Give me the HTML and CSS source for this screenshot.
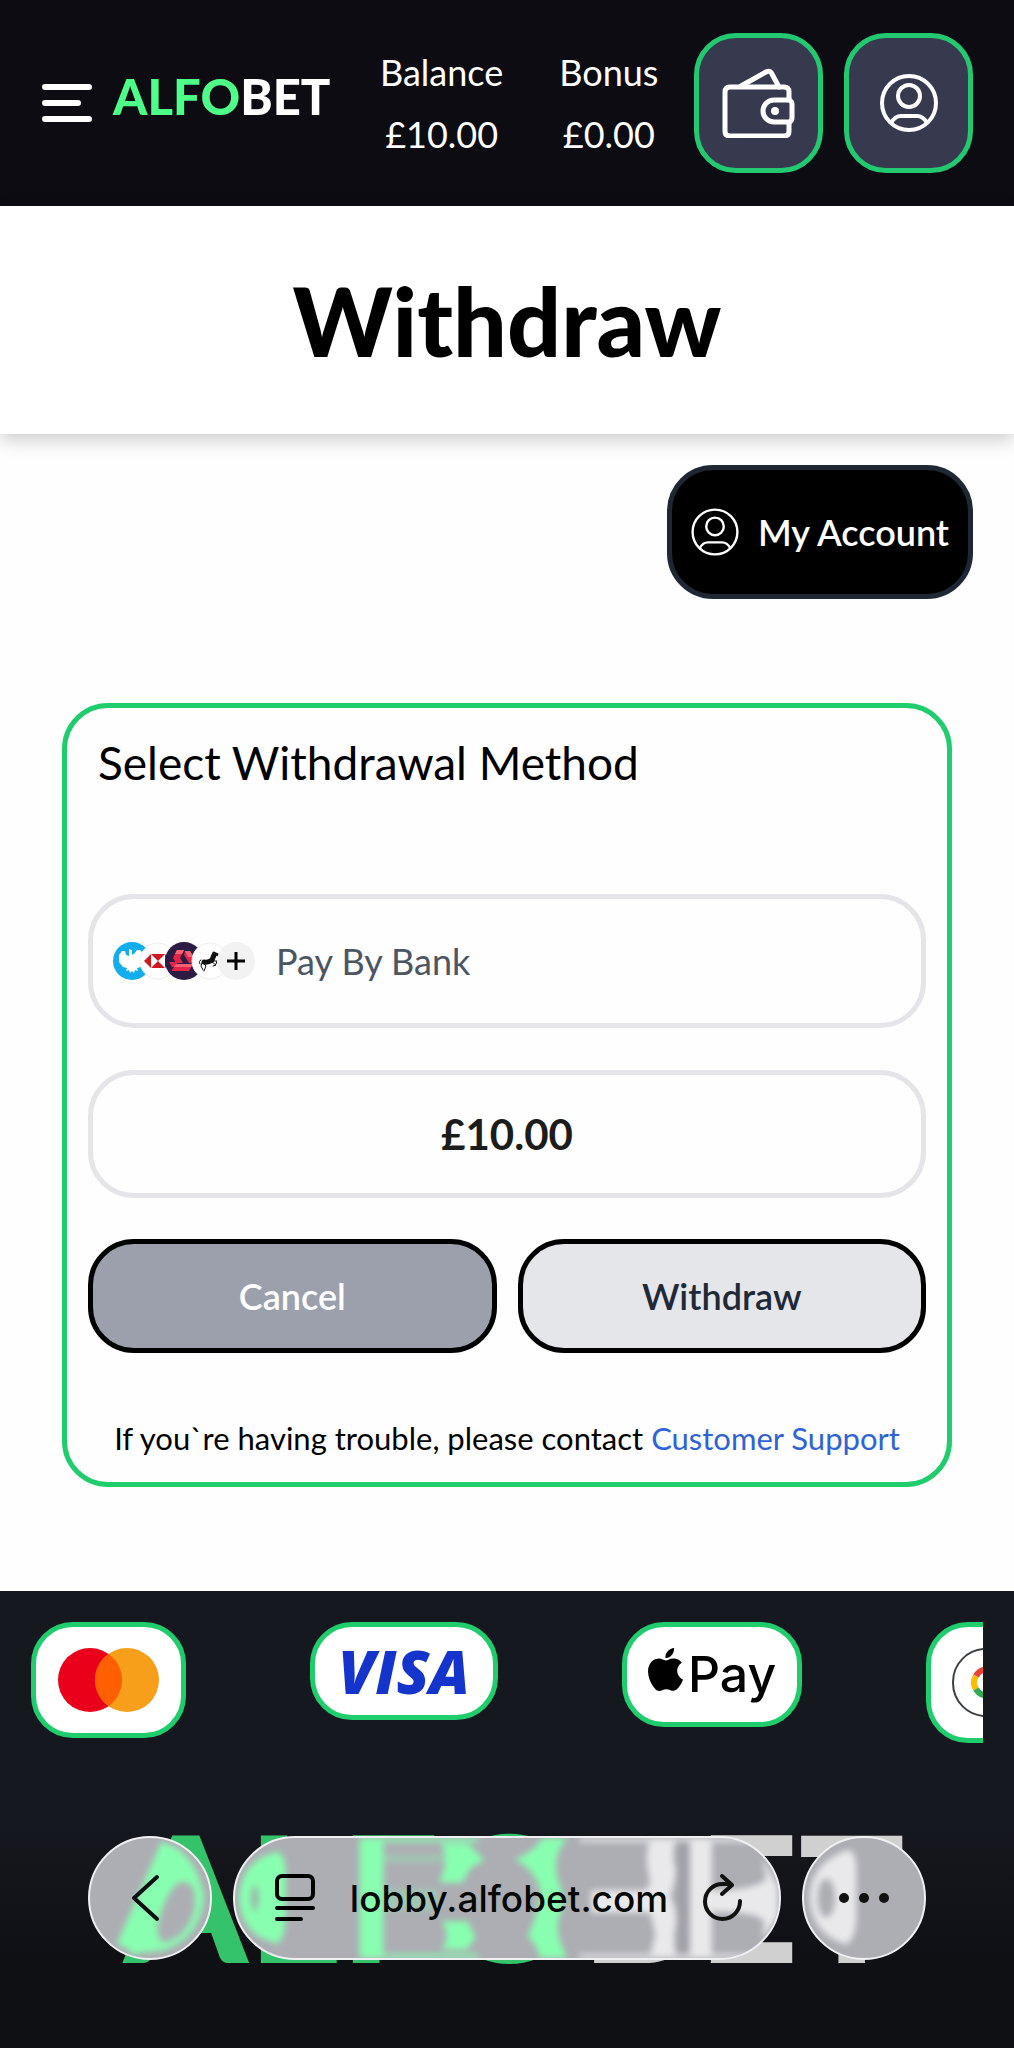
FILE: index.html
```html
<!DOCTYPE html>
<html lang="en">
<head>
    <meta charset="UTF-8">
    <meta name="viewport" content="width=device-width, initial-scale=1.0">
    <title>Withdraw</title>
    <link rel="stylesheet" href="styles.css">
</head>
<body>

    <header class="topbar">
        <button class="menu-button" aria-label="Menu">
            <svg width="50" height="38" viewBox="0 0 50 38" stroke="#fff" stroke-width="6" stroke-linecap="round">
                <path d="M3 3h44M3 19h33M3 35h44"/>
            </svg>
        </button>
        <a href="#" class="logo"><span class="logo-green">ALFO</span>BET</a>
        <div class="stats">
            <div class="stat"><span>Balance</span><span>£10.00</span></div>
            <div class="stat"><span>Bonus</span><span>£0.00</span></div>
        </div>
        <div class="top-actions">
            <button class="icon-button" aria-label="Wallet">
                <svg width="74" height="70" viewBox="0 0 74 70" fill="none" stroke="#fff" stroke-width="5" stroke-linejoin="round" stroke-linecap="round">
                    <path d="M67 32V24q0-5-5-5H8q-5 0-5 5v39q0 5 5 5h54q5 0 5-5v-8"/>
                    <path d="M19 18 44 4q4-2 6 2l7 13"/>
                    <path d="M67 32H52a11 11 0 0 0 0 22h15q3-1 3-4V36q0-3-3-4z"/>
                    <circle cx="53" cy="43" r="4" fill="#fff" stroke="none"/>
                </svg>
            </button>
            <button class="icon-button" aria-label="Profile">
                <svg width="60" height="60" viewBox="0 0 60 60" fill="none" stroke="#fff" stroke-width="4">
                    <circle cx="30" cy="30" r="27"/>
                    <circle cx="30" cy="23" r="11"/>
                    <path d="M12 50q4-7 10-7h16q6 0 10 7"/>
                </svg>
            </button>
        </div>
    </header>

    <div class="page-title">
        <h1>Withdraw</h1>
    </div>

    <main>
        <div class="account-row">
            <button class="account-button">
                <svg width="48" height="48" viewBox="0 0 60 60" fill="none" stroke="#fff" stroke-width="3">
                    <circle cx="30" cy="30" r="28"/>
                    <circle cx="30" cy="23" r="11"/>
                    <path d="M11 50q4-7 10-7h18q6 0 10 7"/>
                </svg>
                My Account
            </button>
        </div>

        <form class="withdraw-card">
            <h2>Select Withdrawal Method</h2>

            <button type="button" class="field method">
                <svg width="142" height="38" viewBox="0 0 142 38">
                    <circle cx="19" cy="19" r="19" fill="#12adec"/>
                    <path d="M16 7l3 1v5l3-2 2-3h3l4 4v8l-3 5-4 1 1 3-3-1-1 3-2-2-2 2-1-3-3 1 1-3-4-1-4-5v-7l3-4h3l1 4 3 1z" fill="#fff"/>
                    <circle cx="45" cy="19" r="18" fill="#fff" stroke="#eee"/>
                    <path d="M31 19l7-7v14z" fill="#cf1820"/>
                    <path d="M38 12h14l-7 7zM38 26h14l-7-7zM52 12l7 7-7 7z" fill="#cf1820"/>
                    <circle cx="71" cy="19" r="19" fill="#2c1b42"/>
                    <path d="M64 8h7l-4 8 3 5h-7l-3-5zM72 9l4 0 7 12h-7l-5-8zM56 20h7l3 5h-7zM59 28l4-6h17l-4 7H59z" fill="#e32447"/>
                    <path d="M64 8h7l-2 4h-7zM72 9h5l4 6h-6zM63 22h17l-2 3H61z" fill="#fb6172"/>
                    <circle cx="97" cy="19" r="18" fill="#fff" stroke="#eee"/>
                    <g fill="none" stroke="#111" stroke-linecap="round" stroke-linejoin="round">
                        <path d="M91 20q4 1 8-2l2-5" stroke-width="5"/>
                        <path d="M101 11l4 2" stroke-width="3"/>
                        <path d="M90 21l3 3-2 5M89 21l-1 3 2 4M100 19h4l-1 3M99 20l4 3-3 1M88 18q-3 1-1 4" stroke-width="1"/>
                    </g>
                    <circle cx="123" cy="19" r="19" fill="#f2f2f2"/>
                    <path d="M123 10v18M114 19h18" stroke="#000" stroke-width="3"/>
                </svg>
                Pay By Bank
            </button>

            <input type="text" class="field amount" value="£10.00" aria-label="Amount">

            <div class="form-buttons">
                <button type="button" class="cancel-button">Cancel</button>
                <button type="submit" class="submit-button">Withdraw</button>
            </div>

            <p class="help">If you`re having trouble, please contact <a href="#">Customer Support</a></p>
        </form>
    </main>

    <footer class="footer">
        <div class="payments">
            <div class="payment">
                <svg width="103" height="64" viewBox="0 0 101 64">
                    <circle cx="32" cy="32" r="32" fill="#eb001b"/>
                    <circle cx="69" cy="32" r="32" fill="#f79e1b"/>
                    <path d="M50.500 5.900a32 32 0 0 1 0 52.200 32 32 0 0 1 0-52.200z" fill="#ff5f00"/>
                </svg>
            </div>
            <div class="payment visa">VISA</div>
            <div class="payment apple">
                <svg width="35" height="43" viewBox="2.200 0 19.600 24">
                    <path d="M12.152 6.896c-.948 0-2.415-1.078-3.960-1.040-2.040.027-3.910 1.183-4.961 3.014-2.117 3.675-.546 9.103 1.519 12.090 1.013 1.454 2.208 3.090 3.792 3.039 1.520-.065 2.090-.987 3.935-.987 1.831 0 2.350.987 3.960.948 1.637-.026 2.676-1.480 3.676-2.948 1.156-1.688 1.636-3.325 1.662-3.415-.039-.013-3.182-1.221-3.220-4.857-.026-3.040 2.480-4.494 2.597-4.559-1.429-2.090-3.623-2.324-4.390-2.376-2-.156-3.675 1.090-4.610 1.090zM15.530 3.830c.843-1.012 1.400-2.427 1.245-3.830-1.207.052-2.662.805-3.532 1.818-.780.896-1.454 2.338-1.273 3.714 1.338.104 2.715-.688 3.559-1.701"/>
                </svg>
                <span>Pay</span>
            </div>
            <div class="payment">
                <svg width="126" height="69" viewBox="0 0 126 69" fill="none">
                    <rect x="1" y="1" width="124" height="67" rx="33" stroke="#3c4043" stroke-width="2"/>
                    <g stroke-width="6">
                        <path d="M44 26a12 12 0 0 0-20 2" stroke="#ea4335"/>
                        <path d="M24 28a12 12 0 0 0 0 13" stroke="#fbbc04"/>
                        <path d="M24 41a12 12 0 0 0 19 3" stroke="#34a853"/>
                        <path d="M43 44q4-4 4-9H35" stroke="#4285f4"/>
                    </g>
                </svg>
            </div>
        </div>
        <div class="footer-logo"><span class="logo-green">ALFO</span>BET</div>
    </footer>

    <nav class="browser-bar">
        <button class="glass round" aria-label="Back">
            <svg class="tint" viewBox="0 0 124 124" preserveAspectRatio="none">
                <path d="M84 8Q110 20 118 60 114 104 76 116L40 120 46 96z" fill="#88ffb0"/>
                <path d="M84 8 38 114" stroke="#88ffb0" stroke-width="22"/>
                <path d="M92 46q-12 8-20 36-6 20 4 26 24-4 32-34 4-32-16-28z" fill="#adaeb4"/>
            </svg>
            <svg class="glyph" width="38" height="48" viewBox="0 0 38 48" fill="none" stroke="#0b0f12" stroke-width="4" stroke-linecap="round" stroke-linejoin="round">
                <path d="M26 3 3 24l23 21"/>
            </svg>
        </button>
        <div class="glass address">
            <svg class="tint" viewBox="0 0 550 124" preserveAspectRatio="none">
                <g fill="#88ffb0">
                    <path d="M44 14Q6 22 4 62q2 40 40 47 7-10 7-26V34q0-14-7-20z"/>
                    <path d="M126 0h24v124h-24z"/>
                    <path d="M150 0h96v4h-96zM150 120h96v4h-96z"/>
                    <path d="M208 6h28l16 17-14 8-8 15h-24q12-22 2-40zM209 86h26l8 16-8 13h-26q10-14 0-29z"/>
                    <path d="M336 0h-25q-8 14-28 22 22 12 26 34-2 20-13 46 10 8 12 22h28q-14-26-8-42 6-22 0-34-10-28 8-48z"/>
                    <path d="M150 17h62v8h-62z" opacity=".3"/>
                    <path d="M150 53h55v22h-55z" opacity=".3"/>
                </g>
                <g fill="#e9e9eb">
                    <path d="M348 0h190v4H348zM348 120h190v4H348z"/>
                    <path d="M419 4h26q-4 14 1 30-1 14-6 26 8 16 6 30-4 16 0 30h-26l5-20-5-22q-4-2-60-1V54h54q8-4 4-18-4-18 1-32z"/>
                    <path d="M460 0h22v124h-22z"/>
                    <path d="M481 54q46 0 56-12l-4-22 16 30v32l-16 22 2-18q-8-10-54-10z"/>
                </g>
                <path d="M447 4h12v116h-12z" fill="#a0a1a8"/>
                <ellipse cx="20" cy="62" rx="4" ry="13" fill="#9cb8aa"/>
            </svg>
            <svg class="glyph" width="40" height="48" viewBox="0 0 40 48" fill="none" stroke="#000" stroke-width="4" stroke-linecap="round">
                <rect x="2" y="2" width="36" height="23" rx="5"/>
                <path d="M2 34h36M2 45h24"/>
            </svg>
            <span class="url">lobby.alfobet.com</span>
            <button class="reload" aria-label="Reload">
                <svg width="40" height="48" viewBox="0 0 40 48" fill="none" stroke="#111" stroke-width="4" stroke-linecap="round" stroke-linejoin="round">
                    <path d="M37 27A17.500 17.500 0 1 1 20 10h8M19 2l10 9-10 9"/>
                </svg>
            </button>
        </div>
        <button class="glass round" aria-label="More">
            <svg class="tint" viewBox="0 0 124 124" preserveAspectRatio="none">
                <path d="M46 12Q6 26 6 62q2 38 38 48 10-8 10-26V30q0-14-8-18z" fill="#e9e9eb"/>
                <ellipse cx="23" cy="62" rx="9" ry="20" fill="#adaeb4"/>
            </svg>
            <svg class="glyph" width="52" height="12" viewBox="0 0 52 12" fill="#111">
                <circle cx="6" cy="6" r="5"/>
                <circle cx="26" cy="6" r="5"/>
                <circle cx="46" cy="6" r="5"/>
            </svg>
        </button>
    </nav>

</body>
</html>
```

FILE: styles.css
```css
* {
    box-sizing: border-box;
}
body {
    margin: 0;
    min-height: 100vh;
    display: flex;
    flex-direction: column;
    position: relative;
    background-color: #fefefe;
    font-family: Lato, "Noto Sans", sans-serif;
    font-size: 36px;
    color: #000;
}
svg {
    display: block;
    flex-shrink: 0;
}
button, input {
    font-family: inherit;
    font-size: inherit;
    cursor: pointer;
}

/* top bar */
.topbar {
    display: flex;
    align-items: center;
    padding: 33px 41px 33px 42px;
    background-color: #0c0c12;
    color: #fff;
}
.menu-button, .reload {
    padding: 0;
    border: none;
    background: none;
}
.logo {
    margin-left: 21px;
    padding-bottom: 14px;
    font-size: 49px;
    line-height: 50px;
    font-weight: 900;
    color: #fff;
    text-decoration: none;
}
.logo-green {
    color: #4dff88;
}
.stats {
    flex: 1;
    display: flex;
    justify-content: center;
    gap: 56px;
    padding-left: 14px;
}
.stat {
    display: flex;
    flex-direction: column;
    align-items: center;
    line-height: 62px;
}
.top-actions {
    display: flex;
    gap: 21px;
}
.icon-button {
    display: flex;
    align-items: center;
    justify-content: center;
    width: 129px;
    height: 140px;
    padding: 0;
    border: 5px solid #22c970;
    border-radius: 42px;
    background-color: #373a4e;
}

/* page title */
.page-title {
    padding: 56px 42px;
    background-color: #fff;
    box-shadow: 0 6px 18px rgba(0, 0, 0, 0.2);
    text-align: center;
}
.page-title h1 {
    margin: 0;
    font-size: 95px;
    line-height: 116px;
    font-weight: 900;
}

/* account button */
.account-row {
    display: flex;
    justify-content: flex-end;
    padding: 31px 41px 0;
}
.account-button {
    display: flex;
    align-items: center;
    gap: 19px;
    height: 134px;
    padding: 0 19px;
    border: 5px solid #1f2735;
    border-radius: 46px;
    background-color: #000;
    color: #fff;
    font-weight: 600;
}

/* withdrawal form */
.withdraw-card {
    display: flex;
    flex-direction: column;
    margin: 104px 62px;
    padding: 21px;
    border: 5px solid #1fcd6d;
    border-radius: 46px;
}
.withdraw-card h2 {
    margin: 0 0 98px;
    padding: 0 10px;
    font-size: 46px;
    line-height: 67px;
    font-weight: 400;
}
.field {
    border: 5px solid #e5e5e9;
    border-radius: 46px;
    background-color: #fefefe;
}
.method {
    display: flex;
    align-items: center;
    gap: 21px;
    height: 134px;
    margin-bottom: 42px;
    padding: 0 20px;
    color: #4b5563;
}
.amount {
    width: 100%;
    height: 128px;
    margin-bottom: 41px;
    padding: 0;
    text-align: center;
    font-size: 42px;
    font-weight: 700;
    color: #1c1c1c;
}
.form-buttons {
    display: flex;
    gap: 21px;
    margin-bottom: 62px;
}
.cancel-button, .submit-button {
    flex: 1;
    height: 114px;
    border: 5px solid #000;
    border-radius: 46px;
    font-weight: 600;
}
.cancel-button {
    background-color: #9ca0ad;
    color: #fff;
}
.submit-button {
    background-color: #e5e6ea;
    color: #1f2937;
}
.help {
    margin: 0;
    text-align: center;
    font-size: 31px;
    line-height: 46px;
}
.help a {
    color: #2f63d6;
    text-decoration: none;
}

/* footer */
.footer {
    flex: 1;
    padding: 31px;
    background: linear-gradient(#16181f 50%, #0f1014 80%);
    color: #d0d0d0;
    overflow: hidden;
}
.payments {
    display: flex;
    align-items: flex-start;
    gap: 124px;
    height: 208px;
    overflow: hidden;
}
.payment {
    display: flex;
    flex-shrink: 0;
    padding: 21px;
    border: 5px solid #1fcd6d;
    border-radius: 42px;
    background-color: #fff;
}
.visa {
    justify-content: center;
    min-width: 188px;
    font-family: "Open Sans", sans-serif;
    font-size: 60px;
    line-height: 46px;
    font-weight: 800;
    font-style: italic;
    color: #1434cb;
}
.apple {
    gap: 5px;
    color: #000;
    font-family: Inter, sans-serif;
    font-size: 50px;
    line-height: 53px;
    font-weight: 500;
}
.footer-logo {
    margin: 0 93px;
    font-size: 176px;
    line-height: 130px;
    font-weight: 900;
    white-space: nowrap;
}
.footer-logo .logo-green {
    color: #34c26a;
}

/* browser toolbar floating over the page */
.browser-bar {
    position: absolute;
    left: 88px;
    right: 88px;
    bottom: 88px;
    display: flex;
    gap: 21px;
}
.glass {
    position: relative;
    display: flex;
    align-items: center;
    height: 124px;
    padding: 0;
    border: 2px solid #f0f0f3;
    border-radius: 62px;
    background-color: #adaeb4;
    overflow: hidden;
    color: #050805;
}
.glass .tint {
    position: absolute;
    left: 0;
    top: 0;
    width: 100%;
    height: 100%;
    filter: blur(3px);
}
.glyph, .url, .reload {
    position: relative;
}
.round {
    justify-content: center;
    width: 124px;
}
.address {
    flex: 1;
    justify-content: space-between;
    padding: 0 36px 0 40px;
}
.url {
    font-family: Inter, sans-serif;
    font-size: 37px;
    font-weight: 500;
}
```
